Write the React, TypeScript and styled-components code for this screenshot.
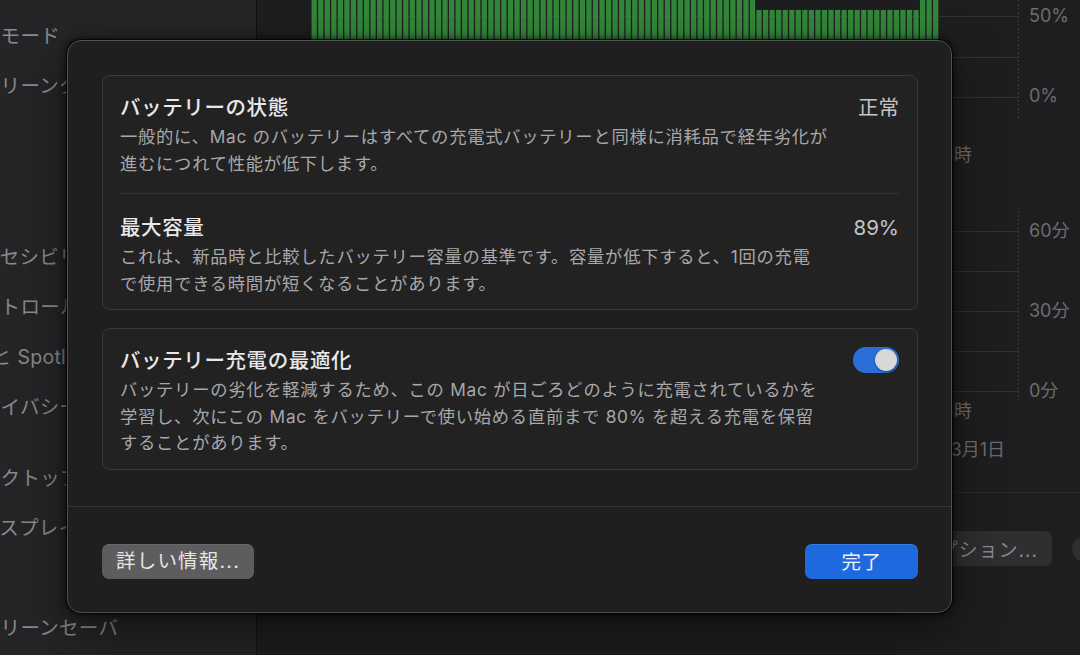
import React from "react";
import styled, { createGlobalStyle } from "styled-components";

const GlobalStyle = createGlobalStyle`
  html, body {
    margin: 0;
    padding: 0;
    background: #1e1e20;
  }
  body {
    font-family: Inter, "Noto Sans CJK JP", "Noto Sans", sans-serif;
    -webkit-font-smoothing: antialiased;
  }
  * {
    box-sizing: border-box;
  }
`;

const SIDEBAR_GROUPS = [
  ["集中モード", "スクリーンタイム"],
  ["一般", "外観", "アクセシビリティ", "コントロールセンター", "Siriと Spotlight", "プライバシーとセキュリティ"],
  ["デスクトップとDock", "ディスプレイ", "壁紙", "スクリーンセーバ"],
];

const HOURS = ["午前0時", "午前6時", "午後0時", "午後6時"];

const BAR_COUNT = 96;
const BAR_AREA = 628;

function UsageBars() {
  const pitch = BAR_AREA / BAR_COUNT;
  return (
    <PlotSvg width={708} height={120}>
      {[16.5, 57.5, 97.5].map((y) => (
        <line key={y} x1={0} x2={708} y1={y} y2={y} stroke="#323234" />
      ))}
      {Array.from({ length: BAR_COUNT }, (_, i) => {
        const x = i * pitch;
        const top = x >= 442 && x < 606 ? 10 : 0;
        return (
          <rect
            key={i}
            x={x + 0.6}
            y={top}
            width={pitch - 1.3}
            height={97 - top}
            fill="#33873a"
          />
        );
      })}
      <line x1={707.5} x2={707.5} y1={0} y2={120} stroke="#3a3a3c" strokeDasharray="2 2" />
    </PlotSvg>
  );
}

function ScreenTimeGrid() {
  return (
    <PlotSvg width={708} height={190}>
      {[20.5, 60.5, 100.5, 140.5, 180.5].map((y) => (
        <line key={y} x1={0} x2={708} y1={y} y2={y} stroke="#323234" />
      ))}
      <line x1={707.5} x2={707.5} y1={0} y2={190} stroke="#3a3a3c" strokeDasharray="2 2" />
    </PlotSvg>
  );
}

function App() {
  return (
    <Screen>
      <GlobalStyle />
      <Sidebar>
        {SIDEBAR_GROUPS.map((group, gi) => (
          <SideGroup key={gi}>
            {group.map((item) => (
              <SideItem key={item}>{item}</SideItem>
            ))}
          </SideGroup>
        ))}
      </Sidebar>

      <Main>
        <ChartRow>
          <UsageBars />
          <AxisCol $top={6}>
            <AxisValue>50%</AxisValue>
            <AxisValue>0%</AxisValue>
          </AxisCol>
        </ChartRow>
        <TickRow $height={91} $padTop={25} $padRight={47}>
          {HOURS.map((h) => (
            <Tick key={h}>{h}</Tick>
          ))}
        </TickRow>
        <ChartRow>
          <ScreenTimeGrid />
          <AxisCol $top={10}>
            <AxisValue>60分</AxisValue>
            <AxisValue>30分</AxisValue>
            <AxisValue>0分</AxisValue>
          </AxisCol>
        </ChartRow>
        <TickRow $height={20} $padTop={0} $padRight={47}>
          {HOURS.map((h) => (
            <Tick key={h}>{h}</Tick>
          ))}
        </TickRow>
        <TickRow $height={71} $padTop={19} $padRight={14}>
          <Tick>2月26日</Tick>
          <Tick>2月27日</Tick>
          <Tick>2月28日</Tick>
          <Tick>3月1日</Tick>
        </TickRow>
        <OptionsRow>
          <GhostButton>オプション...</GhostButton>
          <HelpButton>?</HelpButton>
        </OptionsRow>
      </Main>

      <Dialog>
        <DialogBody>
          <Group>
            <Row>
              <RowText>
                <RowTitle>バッテリーの状態</RowTitle>
                <RowDesc>
                  一般的に、Mac のバッテリーはすべての充電式バッテリーと同様に消耗品で経年劣化が
                  <br />
                  進むにつれて性能が低下します。
                </RowDesc>
              </RowText>
              <RowValue>正常</RowValue>
            </Row>
            <Divider />
            <Row>
              <RowText>
                <RowTitle>最大容量</RowTitle>
                <RowDesc>
                  これは、新品時と比較したバッテリー容量の基準です。容量が低下すると、1回の充電
                  <br />
                  で使用できる時間が短くなることがあります。
                </RowDesc>
              </RowText>
              <RowValue>89%</RowValue>
            </Row>
          </Group>
          <Group>
            <Row>
              <RowText>
                <RowTitle>バッテリー充電の最適化</RowTitle>
                <RowDesc>
                  バッテリーの劣化を軽減するため、この Mac が日ごろどのように充電されているかを
                  <br />
                  学習し、次にこの Mac をバッテリーで使い始める直前まで 80% を超える充電を保留
                  <br />
                  することがあります。
                </RowDesc>
              </RowText>
              <Switch $on />
            </Row>
          </Group>
        </DialogBody>
        <DialogFooter>
          <SecondaryButton>詳しい情報...</SecondaryButton>
          <PrimaryButton>完了</PrimaryButton>
        </DialogFooter>
      </Dialog>
    </Screen>
  );
}

const Screen = styled.div`
  position: relative;
  display: flex;
  width: 1080px;
  height: 655px;
  overflow: hidden;
  background: #1e1e20;
`;

const Sidebar = styled.nav`
  flex: 0 0 257px;
  display: flex;
  flex-direction: column;
  padding-top: 11px;
  background: #252527;
  border-right: 1px solid #111112;
  overflow: hidden;
`;

const SideGroup = styled.div`
  display: flex;
  flex-direction: column;

  & + & {
    margin-top: 21px;
  }
`;

const SideItem = styled.div`
  height: 50px;
  line-height: 50px;
  margin-left: -39px;
  font-size: 19.5px;
  letter-spacing: 0.3px;
  color: #8a8a8c;
  white-space: nowrap;
`;

const Main = styled.main`
  flex: 0 0 841px;
  display: flex;
  flex-direction: column;
  padding-left: 54px;
`;

const ChartRow = styled.div`
  display: flex;
`;

const PlotSvg = styled.svg`
  display: block;
  flex: 0 0 auto;
`;

const AxisCol = styled.div<{ $top: number }>`
  display: flex;
  flex-direction: column;
  gap: 60px;
  padding: ${(p) => p.$top}px 0 0 10px;
`;

const AxisValue = styled.span`
  height: 20px;
  line-height: 20px;
  font-size: 18px;
  color: #6c6c6e;
  white-space: nowrap;
`;

const TickRow = styled.div<{ $height: number; $padTop: number; $padRight: number }>`
  display: grid;
  grid-template-columns: repeat(4, 1fr);
  width: 708px;
  height: ${(p) => p.$height}px;
  padding-top: ${(p) => p.$padTop}px;

  & > span {
    padding-right: ${(p) => p.$padRight}px;
  }
`;

const Tick = styled.span`
  height: 20px;
  line-height: 20px;
  font-size: 18px;
  color: #6c6c6e;
  text-align: right;
  white-space: nowrap;
`;

const OptionsRow = styled.div`
  display: flex;
  justify-content: flex-end;
  align-items: center;
  gap: 20px;
  margin-left: -54px;
  padding-top: 38px;
  border-top: 1px solid #2c2c2e;
`;

const GhostButton = styled.button`
  height: 35px;
  padding: 0 14px;
  border: none;
  border-radius: 7px;
  background: #2f2f31;
  color: #8a8a8c;
  font: inherit;
  font-size: 19px;
  letter-spacing: 1px;
  white-space: nowrap;
`;

const HelpButton = styled.button`
  width: 26px;
  height: 26px;
  border: none;
  border-radius: 50%;
  background: #2f2f31;
  color: #8a8a8c;
  font: inherit;
  font-size: 15px;
`;

const Dialog = styled.section`
  position: absolute;
  left: 67px;
  top: 40px;
  width: 885px;
  height: 573px;
  display: flex;
  flex-direction: column;
  background: #1f1f1f;
  border: 1px solid #505052;
  border-radius: 14px;
  box-shadow: 0 0 0 1px rgba(0, 0, 0, 0.7), 0 0 6px 2px rgba(0, 0, 0, 0.55),
    0 18px 50px rgba(0, 0, 0, 0.5);
`;

const DialogBody = styled.div`
  display: flex;
  flex-direction: column;
  gap: 18px;
  padding: 34px 33px 36px 34px;
  border-bottom: 1px solid #353537;
`;

const Group = styled.div`
  display: flex;
  flex-direction: column;
  padding: 0 18px 0 17px;
  background: #222223;
  border: 1px solid #3a3a3c;
  border-radius: 8px;
`;

const Row = styled.div`
  display: flex;
  justify-content: space-between;
  align-items: flex-start;
  padding: 18px 0 12px;
`;

const Divider = styled.div`
  height: 1px;
  margin: 4px 0 2px;
  background: #333335;
`;

const RowText = styled.div`
  display: flex;
  flex-direction: column;
`;

const RowTitle = styled.div`
  font-size: 20.5px;
  line-height: 28px;
  font-weight: 500;
  letter-spacing: 0.6px;
  color: #e8e8e8;
  white-space: nowrap;
`;

const RowDesc = styled.div`
  margin-top: 2px;
  font-size: 17.3px;
  line-height: 26.5px;
  letter-spacing: 0.75px;
  color: #a8a8aa;
  white-space: nowrap;
`;

const RowValue = styled.div`
  font-size: 20.5px;
  line-height: 28px;
  color: #c4c4c6;
  white-space: nowrap;
`;

const Switch = styled.span<{ $on?: boolean }>`
  position: relative;
  flex: 0 0 46px;
  height: 26px;
  border-radius: 13px;
  background: ${(p) => (p.$on ? "#2a6fd8" : "#4a4a4c")};

  &::after {
    content: "";
    position: absolute;
    top: 2px;
    left: ${(p) => (p.$on ? "22px" : "2px")};
    width: 22px;
    height: 22px;
    border-radius: 50%;
    background: #d8d8d8;
    box-shadow: 0 1px 2px rgba(0, 0, 0, 0.4);
  }
`;

const DialogFooter = styled.div`
  display: flex;
  justify-content: space-between;
  align-items: flex-start;
  padding: 37px 33px 0 34px;
`;

const FooterButton = styled.button`
  height: 35px;
  border: none;
  border-radius: 7px;
  font: inherit;
  font-size: 19.5px;
  line-height: 35px;
  white-space: nowrap;
`;

const SecondaryButton = styled(FooterButton)`
  padding: 0 14px;
  background: #5d5d5f;
  color: #e6e6e6;
  letter-spacing: 1.2px;
  box-shadow: inset 0 1px 0 rgba(255, 255, 255, 0.08);
`;

const PrimaryButton = styled(FooterButton)`
  width: 113px;
  background: #1f69e0;
  color: #f2f2f2;
  letter-spacing: 0.6px;
  box-shadow: inset 0 1px 0 rgba(255, 255, 255, 0.12);
`;

export default App;
